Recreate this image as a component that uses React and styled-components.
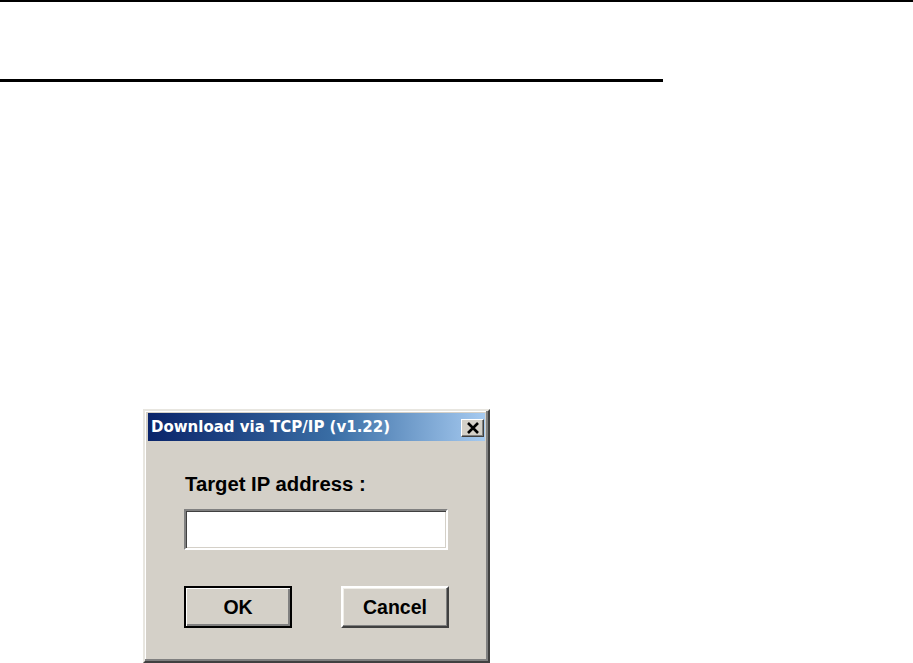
import React from "react";
import styled, { createGlobalStyle } from "styled-components";

const Global = createGlobalStyle`
  html, body {
    margin: 0;
    padding: 0;
    background: #ffffff;
    overflow: hidden;
  }
  body {
    font-family: "Liberation Sans", Arial, sans-serif;
  }
`;

const Page = styled.div`
  width: 913px;
  height: 663px;
  display: flex;
  flex-direction: column;
  align-items: flex-start;
`;

const Rule = styled.div`
  width: ${(p) => p.$width};
  height: ${(p) => p.$thick}px;
  margin-top: ${(p) => p.$top}px;
  background: #000;
  flex-shrink: 0;
`;

const Dialog = styled.div`
  box-sizing: border-box;
  margin-top: 327px;
  margin-left: 143px;
  width: 347px;
  height: 254px;
  flex-shrink: 0;
  background: #d4d0c8;
  border: 2px solid;
  border-color: #e8e6e0 #404040 #404040 #e8e6e0;
  box-shadow: inset -2px -2px #808080, inset 1px 1px #ffffff;
  padding: 2px 3px 3px 3px;
  display: flex;
  flex-direction: column;
`;

const TitleBar = styled.div`
  height: 28px;
  flex-shrink: 0;
  display: flex;
  align-items: center;
  justify-content: space-between;
  padding: 0 1px 0 3px;
  background: linear-gradient(to right, #0a246a 0%, #3a6ea5 55%, #a6caf0 100%);
`;

const Title = styled.span`
  font-family: "DejaVu Sans", Verdana, sans-serif;
  font-weight: bold;
  font-size: 15px;
  color: #ffffff;
  white-space: nowrap;
`;

const CloseButton = styled.div`
  box-sizing: border-box;
  width: 23px;
  height: 18px;
  margin-top: 2px;
  background: #d4d0c8;
  border: 1px solid;
  border-color: #ffffff #404040 #404040 #ffffff;
  box-shadow: inset -1px -1px #808080;
  display: flex;
  align-items: center;
  justify-content: center;
`;

const Body = styled.div`
  display: flex;
  flex-direction: column;
  align-items: flex-start;
  padding: 32px 0 0 36px;
`;

const Label = styled.div`
  font-weight: bold;
  font-size: 20.3px;
  line-height: 23px;
  color: #000;
  padding-left: 1px;
  white-space: nowrap;
`;

const Field = styled.input`
  box-sizing: border-box;
  margin-top: 13px;
  width: 264px;
  height: 41px;
  background: #ffffff;
  border: 2px solid;
  border-color: #808080 #ffffff #ffffff #808080;
  box-shadow: inset 1px 1px #404040, inset -1px -1px #d4d0c8;
  outline: none;
  padding: 0 4px;
  font-family: "Liberation Sans", Arial, sans-serif;
  font-size: 18px;
`;

const ButtonRow = styled.div`
  margin-top: 36px;
  width: 265px;
  display: flex;
  justify-content: space-between;
`;

const Button = styled.div`
  box-sizing: border-box;
  width: 108px;
  height: 42px;
  display: flex;
  align-items: center;
  justify-content: center;
  font-weight: bold;
  font-size: 19.5px;
  color: #000;
  background: #d4d0c8;
  border: ${(p) => (p.$default ? "2px solid #000" : "2px solid")};
  border-color: ${(p) =>
    p.$default ? "#000" : "#ffffff #404040 #404040 #ffffff"};
  box-shadow: ${(p) =>
    p.$default
      ? "inset 1px 1px #ffffff, inset -2px -2px #808080"
      : "inset -1px -1px #808080, inset 1px 1px #f0eee8"};
`;

export default function App() {
  return (
    <>
      <Global />
      <Page>
        <Rule $width="100%" $thick={2} $top={0} />
        <Rule $width="663px" $thick={3} $top={77} />
        <Dialog>
          <TitleBar>
            <Title>Download via TCP/IP (v1.22)</Title>
            <CloseButton>
              <svg width="14" height="12" viewBox="0 0 14 12">
                <path
                  d="M2 1 L12 11 M12 1 L2 11"
                  stroke="#000"
                  strokeWidth="2.6"
                  fill="none"
                />
              </svg>
            </CloseButton>
          </TitleBar>
          <Body>
            <Label>Target IP address :</Label>
            <Field type="text" defaultValue="" />
            <ButtonRow>
              <Button $default>OK</Button>
              <Button>Cancel</Button>
            </ButtonRow>
          </Body>
        </Dialog>
      </Page>
    </>
  );
}
